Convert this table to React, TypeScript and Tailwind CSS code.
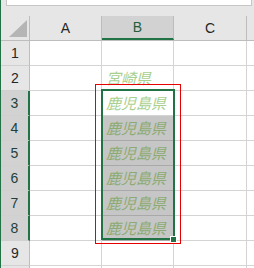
import clsx from 'clsx';

const rows = [1, 2, 3, 4, 5, 6, 7, 8, 9, 10];
const cols = ['A', 'B', 'C', 'D'];

// column widths incl. the right gridline
const colW = ['w-[72px]', 'w-[72px]', 'w-[73px]', 'flex-1'];

const values: Record<number, string> = {
  2: '宮崎県',
  3: '鹿児島県',
  4: '鹿児島県',
  5: '鹿児島県',
  6: '鹿児島県',
  7: '鹿児島県',
  8: '鹿児島県',
};

const isSelRow = (r: number) => r >= 3 && r <= 8;

function Corner() {
  return (
    <div className="w-[29px] h-full shrink-0 border-r border-[#bdbdbd] relative">
      <svg width="18" height="17" viewBox="0 0 18 17" className="absolute left-[8px] top-[4px]">
        <polygon points="18,0 18,17 0,17" fill="#b5b5b5" />
      </svg>
    </div>
  );
}

export default function App() {
  return (
    <div className="w-[254px] h-[268px] overflow-hidden relative bg-white border-l border-[#217346] font-['Liberation_Sans',sans-serif]">
      {/* formula bar edge */}
      <div className="h-[16px] bg-[#e6e6e6] pl-[5px] pr-[2px]">
        <div className="h-[6px] bg-white border-x border-b border-[#c6c6c6]" />
      </div>

      {/* column headers; D is only a sliver at the right edge */}
      <div className="flex h-[25px] bg-[#e6e6e6] border-b border-[#bdbdbd]">
        <Corner />
        {cols.map((c, i) => (
          <div
            key={c}
            className={clsx(
              'shrink-0 h-full flex items-center justify-center text-[14px] border-[#bdbdbd]',
              colW[i],
              i < 3 && 'border-r',
              c === 'B' ? 'bg-[#d2d2d2] text-[#1f5f3c] border-b-2 border-b-[#217346]' : 'text-[#262626]'
            )}
          >
            {c !== 'D' && c}
          </div>
        ))}
      </div>

      {/* sheet rows */}
      {rows.map((r) => (
        <div key={r} className="flex h-[25px]">
          <div
            className={clsx(
              'w-[29px] shrink-0 flex items-center justify-center text-[14px] border-b border-[#d0d0d0]',
              isSelRow(r)
                ? 'bg-[#d2d2d2] text-[#1f3f3a] border-r-2 border-r-[#217346]'
                : 'bg-[#e6e6e6] text-[#262626] border-r border-r-[#bdbdbd]'
            )}
          >
            {r < 10 && r}
          </div>
          {cols.map((c, i) => {
            const v = c === 'B' ? values[r] : undefined;
            const shaded = c === 'B' && r >= 4 && r <= 8;
            return (
              <div
                key={c}
                className={clsx(
                  'shrink-0 h-full flex items-center pl-[4px] border-b',
                  colW[i],
                  i < 3 && 'border-r border-r-[#d4d4d4]',
                  shaded ? 'bg-[#c6c6c6] border-b-[#a9a9a9]' : 'border-b-[#d4d4d4]'
                )}
              >
                {v && (
                  <span
                    className={clsx(
                      "italic text-[15px] leading-none -mt-[2px] font-['Noto_Sans_CJK_JP',sans-serif]",
                      shaded ? 'text-[#8cab72]' : 'text-[#a9d08e]'
                    )}
                  >
                    {v}
                  </span>
                )}
              </div>
            );
          })}
        </div>
      ))}

      {/* selection outline B3:B8 with fill handle */}
      <div className="absolute left-[100px] top-[89px] w-[74px] h-[151px] border-2 border-[#217346] pointer-events-none" />
      <div className="absolute left-[169px] top-[236px] w-[7px] h-[7px] bg-[#217346] border border-white" />

      {/* red marker */}
      <div className="absolute left-[94px] top-[84px] w-[86px] h-[160px] border border-[#e60000] pointer-events-none" />
    </div>
  );
}
